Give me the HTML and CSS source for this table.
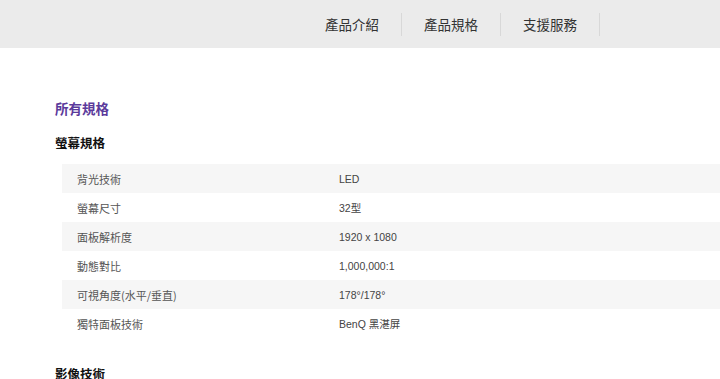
FILE: index.html
```html
<!DOCTYPE html>
<html lang="zh-Hant">
<head>
<meta charset="utf-8">
<title>所有規格</title>
<link rel="stylesheet" href="styles.css">
</head>
<body>
<nav class="topnav">
  <a class="nav-item">產品介紹</a>
  <a class="nav-item">產品規格</a>
  <a class="nav-item">支援服務</a>
</nav>
<main class="content">
  <h1 class="title">所有規格</h1>
  <h2 class="section">螢幕規格</h2>
  <div class="spec-table">
    <div class="row"><span class="label">背光技術</span><span class="value">LED</span></div>
    <div class="row"><span class="label">螢幕尺寸</span><span class="value">32型</span></div>
    <div class="row"><span class="label">面板解析度</span><span class="value">1920 x 1080</span></div>
    <div class="row"><span class="label">動態對比</span><span class="value">1,000,000:1</span></div>
    <div class="row"><span class="label">可視角度(水平/垂直)</span><span class="value">178°/178°</span></div>
    <div class="row"><span class="label">獨特面板技術</span><span class="value">BenQ 黑湛屏</span></div>
  </div>
  <h2 class="section section-next">影像技術</h2>
</main>
</body>
</html>
```

FILE: styles.css
```css
* { box-sizing: border-box; }
html, body { margin: 0; padding: 0; }
body {
  background: #fff;
  font-family: "Liberation Sans", "Noto Sans CJK TC", sans-serif;
  color: #333;
  width: 720px;
  height: 379px;
  overflow: hidden;
}
.topnav {
  height: 48px;
  background: #ebebeb;
  display: flex;
  align-items: center;
  padding-left: 303px;
}
.nav-item {
  width: 99px;
  height: 23px;
  display: flex;
  align-items: center;
  justify-content: center;
  font-family: "Noto Sans CJK TC", sans-serif;
  font-size: 13.5px;
  color: #333;
  border-right: 1px solid #d8d8d8;
}
.content {
  padding: 52px 0 0 55px;
}
.title {
  margin: 0;
  font-family: "Noto Sans CJK TC", sans-serif;
  font-size: 13.5px;
  font-weight: 700;
  line-height: 16px;
  color: #5b3a9b;
}
.section {
  margin: 19px 0 0;
  font-family: "Noto Sans CJK TC", sans-serif;
  font-size: 12.5px;
  font-weight: 700;
  line-height: 16px;
  color: #111;
}
.spec-table {
  margin: 13px 0 0 7px;
}
.row {
  display: flex;
  align-items: center;
  height: 29px;
  padding-left: 15px;
  font-size: 11px;
  color: #555;
}
.row:nth-child(odd) { background: #f6f6f6; }
.label {
  width: 262px;
  font-family: "Noto Sans CJK TC", sans-serif;
}
.value {
  font-size: 10.5px;
  color: #444;
}
.section-next {
  margin-top: 28px;
}
```
